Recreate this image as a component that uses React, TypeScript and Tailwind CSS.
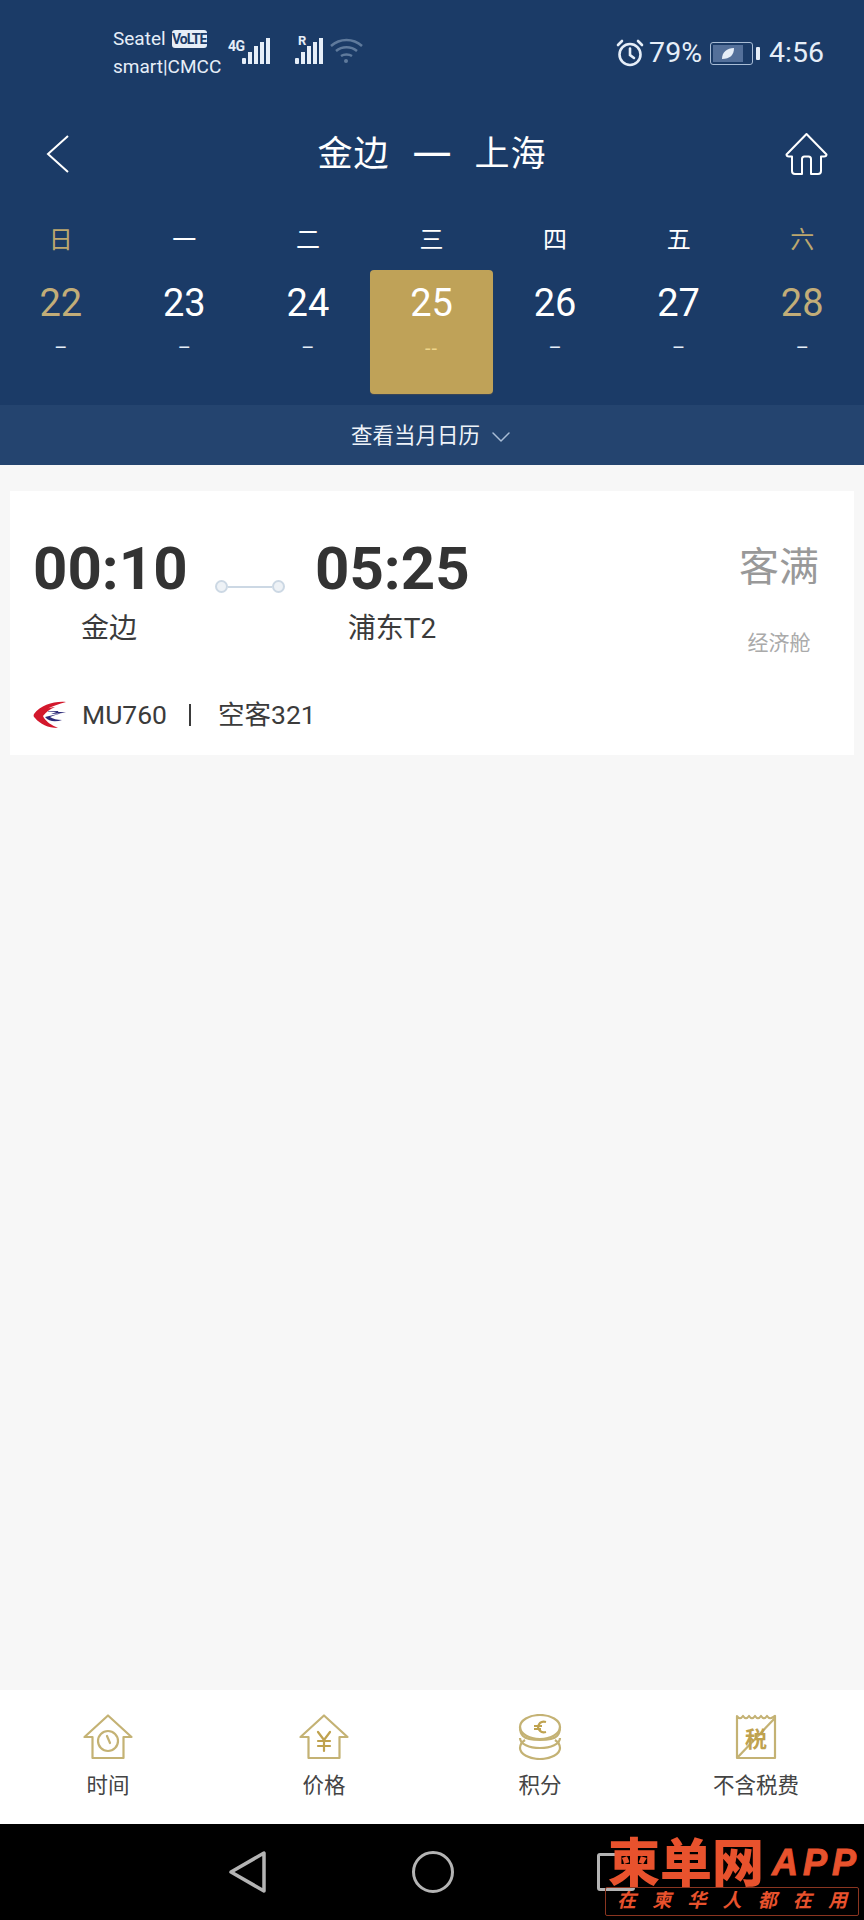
import React from 'react';
import { ChevronDown } from 'lucide-react';

const days = [
  { label: '日', date: '22', weekend: true },
  { label: '一', date: '23' },
  { label: '二', date: '24' },
  { label: '三', date: '25', active: true },
  { label: '四', date: '26' },
  { label: '五', date: '27' },
  { label: '六', date: '28', weekend: true }
];

const Bars: React.FC<{ className?: string }> = ({ className }) => (
  <svg width="29" height="27" viewBox="0 0 29 27" className={className} fill="#e6eef8">
    <rect x="0" y="20" width="4" height="6" rx="1" />
    <rect x="6" y="14" width="4" height="12" />
    <rect x="12" y="8" width="4" height="18" />
    <rect x="18" y="4" width="4" height="22" />
    <rect x="24" y="0" width="4" height="26" />
  </svg>
);

const ClockHouse = () => (
  <svg width="50" height="46" viewBox="0 0 50 46" fill="none" stroke="#c4b274" strokeWidth="2.2" strokeLinejoin="round" strokeLinecap="round">
    <path d="M25 1.5 1.5 23h8v21h31V23h8z" />
    <circle cx="25" cy="27" r="10" />
    <path d="M24 22l3 7" />
  </svg>
);

const YenHouse = () => (
  <svg width="50" height="46" viewBox="0 0 50 46" fill="none" stroke="#c4b274" strokeWidth="2.2" strokeLinejoin="round" strokeLinecap="round">
    <path d="M25 1.5 1.5 23h8v21h31V23h8z" />
    <path d="M19 18l6 8 6-8M25 26v11M19 27h12M19 32h12" stroke="#bfa24f" />
  </svg>
);

const Coins = () => (
  <svg width="44" height="46" viewBox="0 0 44 46" fill="none" stroke="#c4b274" strokeWidth="2.2">
    <path d="M2 24c0 6 9 10 20 10s20-4 20-10" />
    <path d="M2 34c0 6 9 11 20 11s20-5 20-11c0-3-2-6-5-8M7 26c-3 2-5 5-5 8" />
    <path d="M2 13c0 4 1 7 3 9 3 3 10 4 17 4s14-1 17-4c2-2 3-5 3-9" />
    <ellipse cx="22" cy="13" rx="20" ry="12" />
    <path d="M28 8c-4-1-7 1-8 5 1 4 4 6 8 5M16 12h8M16 15h7" stroke="#bfa24f" />
  </svg>
);

const TaxSlip = () => (
  <svg width="42" height="46" viewBox="0 0 42 46" fill="none" stroke="#c4b274" strokeWidth="2.2" strokeLinejoin="round">
    <path d="M2 2c2 3 4 3 6 0 2 3 4 3 6 0 2 3 4 3 6 0 2 3 4 3 6 0 2 3 4 3 6 0 2 3 4 3 8 0v42H2z" />
    <path d="M2 44 40 4" />
    <text x="21" y="33" textAnchor="middle" fontSize="22" fontWeight="700" fill="#bfa24f" stroke="none" fontFamily="'Noto Sans CJK SC', sans-serif">税</text>
  </svg>
);

const tabs = [
  { label: '时间', icon: <ClockHouse /> },
  { label: '价格', icon: <YenHouse /> },
  { label: '积分', icon: <Coins /> },
  { label: '不含税费', icon: <TaxSlip /> }
];

export default function App() {
  return (
    <div className="w-[864px] h-[1920px] flex flex-col bg-[#f7f7f7] overflow-hidden font-['Roboto','Noto_Sans_CJK_SC',sans-serif]">
      {/* status bar */}
      <div className="bg-[#1b3b67] h-[104px] shrink-0 flex items-start pl-[113px] pr-[40px] pt-[25px] text-[#e6eef8]">
        <div className="w-[115px] text-[19px] leading-[28px]">
          <div className="flex items-center">
            Seatel
            <span className="ml-[6px] w-[35px] h-[18px] rounded-[3px] bg-[#e6eef8] text-[#1b3b67] text-[14px] leading-[18px] font-bold text-center tracking-[-1px]">VoLTE</span>
          </div>
          <div>smart|CMCC</div>
        </div>
        <div className="flex items-start pt-[13px]">
          <div className="w-[14px] text-[14px] leading-[14px] font-bold mt-[1px] tracking-[-0.5px]">4G</div>
          <Bars />
          <div className="ml-[24px] relative">
            <span className="absolute left-[3px] -top-[3px] text-[13px] leading-[12px] font-bold">R</span>
            <Bars />
          </div>
          <svg width="33" height="27" viewBox="0 0 33 27" fill="none" stroke="#5f7a9c" strokeWidth="2.5" className="ml-[6px]">
            <path d="M1 8c9-8 22-8 31 0M6 13c6-5 15-5 21 0M11 18c3-2 8-2 11 0" />
            <circle cx="16" cy="23" r="2" fill="#5f7a9c" stroke="none" />
          </svg>
        </div>
        <div className="ml-auto flex items-center h-[56px] text-[28.500px]">
          <svg width="28" height="28" viewBox="0 0 28 28" fill="none" stroke="#e6eef8" strokeWidth="2.6" strokeLinecap="round">
            <circle cx="14" cy="15.5" r="10.5" />
            <path d="M14 9.5v6.5l4 3M2 6l4-4M26 6l-4-4" />
          </svg>
          <span className="ml-[5px]">79%</span>
          <div className="ml-[8px] w-[43px] h-[23px] rounded-[3px] border border-[#a9bdd6] p-[2px]">
            <div className="w-[30px] h-full bg-[#54709a] flex items-center justify-center">
              <svg width="14" height="13" viewBox="0 0 14 13" fill="#e6eef8"><path d="M1 12C1 5 6 1 13 1c0 7-4 11-12 11z" /></svg>
            </div>
          </div>
          <div className="ml-[3px] w-[4px] h-[13px] rounded-[1px] bg-[#e6eef8]" />
          <span className="ml-[9px]">4:56</span>
        </div>
      </div>

      {/* title + date strip */}
      <div className="bg-[#1b3b67] h-[301px] shrink-0 text-white">
        <div className="relative h-[100px] flex items-center justify-center gap-[23px] pt-[3px] text-[35px]">
          <svg className="absolute left-[46px] top-[31px]" width="24" height="38" viewBox="0 0 24 38" fill="none" stroke="#fff" strokeWidth="2">
            <path d="M22 1 2 19l20 18" />
          </svg>
          <span className="tracking-[1px]">金边</span>
          <span className="text-[39px] leading-[40px]">一</span>
          <span className="tracking-[1px]">上海</span>
          <svg className="absolute left-[785px] top-[28px]" width="43" height="44" viewBox="0 0 43 44" fill="none" stroke="#fff" strokeWidth="2" strokeLinejoin="round">
            <path d="M21.5 2 1.5 22.5c0 1.500 1 2 2.500 2H7V39c0 2 1.500 3 3 3h7V27c0-1.500 1-2.500 2.500-2.500h4c1.500 0 2.500 1 2.500 2.500v15h7c1.500 0 3-1 3-3V24.500h3c1.500 0 2.500-.5 2.500-2z" />
          </svg>
        </div>
        <div className="grid grid-cols-7 mt-[18px] -ml-[1px] h-[36px] text-[24px] leading-[36px] text-center">
          {days.map((d) => (
            <div key={d.label} className={d.weekend ? 'text-[#bda76e]' : 'text-white'}>{d.label}</div>
          ))}
        </div>
        <div className="grid grid-cols-7 mt-[12px] -ml-[1px] h-[124px] text-center">
          {days.map((d) => (
            <div key={d.date} className={d.active ? 'rounded-[4px] bg-[#bfa258] shadow-[0_1px_1px_#3b4658]' : ''}>
              <div className={`text-[38px] leading-[44px] mt-[11px] ${d.weekend ? 'text-[#c2ad78]' : 'text-white'}`}>{d.date}</div>
              <div className={`text-[20px] leading-[24px] mt-[11px] ${d.active ? 'text-[#eed58a] tracking-[1px]' : 'text-[#e6eef8]'}`}>{d.active ? '--' : '–'}</div>
            </div>
          ))}
        </div>
      </div>

      {/* month link */}
      <div className="h-[60px] shrink-0 bg-[#24446f] flex items-center justify-center pl-[4px] pt-[3px] text-[21.500px] text-[#eef3f9]">
        查看当月日历
        <ChevronDown className="ml-[5px] text-[#a9bdd6]" size={32} strokeWidth={1.1} />
      </div>

      {/* results */}
      <div className="flex-1 px-[10px] pt-[26px]">
        <div className="h-[264px] bg-white pl-[23px] pr-[34px] pt-[48px]">
          <div className="flex items-start">
            <div className="w-[152px] text-center">
              <div className="text-[60px] leading-[60px] font-bold text-[#333333]">00:10</div>
              <div className="mt-[10px] text-[28px] leading-[40px] text-[#3b3b3b]">金边</div>
            </div>
            <div className="ml-[30px] w-[70px] mt-[41px] flex items-center">
              <span className="w-[13px] h-[13px] rounded-full border-2 border-[#ccd8e4] bg-[#eef2f6]" />
              <span className="flex-1 h-[2px] bg-[#ccd8e4]" />
              <span className="w-[13px] h-[13px] rounded-full border-2 border-[#ccd8e4] bg-[#eef2f6]" />
            </div>
            <div className="ml-[30px] w-[154px] text-center">
              <div className="text-[60px] leading-[60px] font-bold text-[#333333]">05:25</div>
              <div className="mt-[10px] text-[28px] leading-[40px] text-[#3b3b3b]">浦东T2</div>
            </div>
            <div className="ml-auto w-[82px] text-center text-[#999999]">
              <div className="text-[40px] leading-[50px] mt-[4px]">客满</div>
              <div className="text-[21px] leading-[30px] mt-[35px] text-[#aaaaaa]">经济舱</div>
            </div>
          </div>
          <div className="flex items-center h-[40px] mt-[37px] text-[26.500px] text-[#3b3b3b]">
            <svg width="34" height="28" viewBox="0 0 34 28" className="shrink-0">
              <path d="M33 1C21 0 8 4 1 13c-1 2 0 3 1 4 5 6 13 10 23 10-7-3-11-6-14-10l-1-2c3-4 7-7 12-9-3 0-6 1-8 2 5-3 12-5 19-7z" fill="#d3182c" />
              <path d="M14 10h12l-8 3c5 0 10-1 15-2L12 16c4 5 11 5 17 3-5 0-9-1-12-3 5-2 11-4 16-5z" fill="#2c2a78" />
            </svg>
            <span className="ml-[15px]">MU760</span>
            <span className="ml-[22px] w-[2px] h-[22px] bg-[#3b3b3b]" />
            <span className="ml-[27px]">空客321</span>
          </div>
        </div>
      </div>

      {/* bottom tabs */}
      <div className="h-[134px] shrink-0 bg-white grid grid-cols-4 pt-[23px]">
        {tabs.map((t) => (
          <div key={t.label} className="flex flex-col items-center">
            <div className="h-[47px] flex items-center justify-center">{t.icon}</div>
            <div className="mt-[8px] text-[21.500px] leading-[36px] text-[#444444]">{t.label}</div>
          </div>
        ))}
      </div>

      {/* android nav */}
      <div className="relative h-[96px] shrink-0 bg-black">
        <div className="h-full flex items-center pl-[229px]">
          <svg width="38" height="42" viewBox="0 0 38 42" fill="none" stroke="#b4b4b4" strokeWidth="3.500" strokeLinejoin="round">
            <path d="M2 21 35 2v38z" />
          </svg>
          <span className="ml-[145px] w-[42px] h-[42px] rounded-full border-[3.500px] border-[#b4b4b4]" />
          <span className="ml-[143px] w-[38px] h-[38px] rounded-[3px] border-[3.500px] border-[#b4b4b4]" />
        </div>
        {/* watermark */}
        <div className="absolute left-[608px] top-[9px] flex items-center text-[#e8522d] font-bold">
          <span className="text-[52px] leading-[54px] font-['Noto_Sans_CJK_SC',sans-serif] font-black">柬单网</span>
          <span className="ml-[8px] mt-[6px] text-[36px] leading-[40px] italic font-black tracking-[5px] font-['Liberation_Sans',sans-serif] [-webkit-text-stroke:1px_#e8522d]">APP</span>
        </div>
        <div className="absolute left-[605px] top-[63px] w-[254px] h-[29px] border border-[#8a3520] rounded-[2px] flex items-center justify-between px-[11px] text-[#e8522d] text-[19px] italic font-bold">
          {['在', '柬', '华', '人', '都', '在', '用'].map((c, i) => (
            <span key={i}>{c}</span>
          ))}
        </div>
      </div>
    </div>
  );
}
